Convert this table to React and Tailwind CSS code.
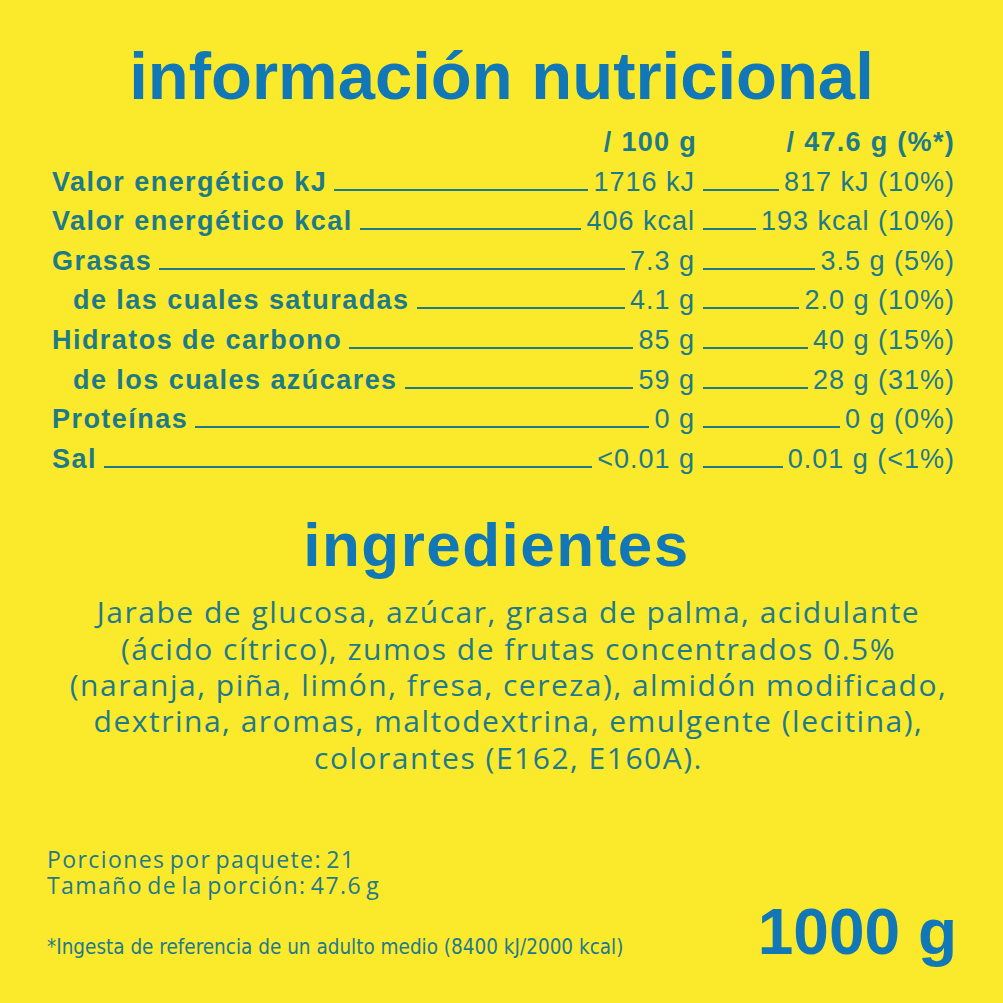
import React from 'react'

const rows = [
  { label: 'Valor energético kJ', a: '1716 kJ', b: '817 kJ (10%)' },
  { label: 'Valor energético kcal', a: '406 kcal', b: '193 kcal (10%)' },
  { label: 'Grasas', a: '7.3 g', b: '3.5 g (5%)' },
  { label: 'de las cuales saturadas', a: '4.1 g', b: '2.0 g (10%)', sub: true },
  { label: 'Hidratos de carbono', a: '85 g', b: '40 g (15%)' },
  { label: 'de los cuales azúcares', a: '59 g', b: '28 g (31%)', sub: true },
  { label: 'Proteínas', a: '0 g', b: '0 g (0%)' },
  { label: 'Sal', a: '<0.01 g', b: '0.01 g (<1%)' },
]

const ingredients = [
  'Jarabe de glucosa, azúcar, grasa de palma, acidulante',
  '(ácido cítrico), zumos de frutas concentrados 0.5%',
  '(naranja, piña, limón, fresa, cereza), almidón modificado,',
  'dextrina, aromas, maltodextrina, emulgente (lecitina),',
  'colorantes (E162, E160A).',
]

const Leader = () => <div className="flex-1 h-[2px] bg-[#1d7a89] mb-[1px]" />

const App = () => {
  return (
    <div className="w-[1003px] h-[1003px] flex flex-col bg-[#fbe92b] overflow-hidden font-['Liberation_Sans',Arial,sans-serif]">
      <h1 className="pt-[42px] text-center text-[67px] leading-none font-bold text-[#1177b6]">
        información nutricional
      </h1>

      <div className="mt-[14px] pl-[52px] pr-[48px] text-[27px] text-[#1d7a89]">
        <div className="flex items-baseline h-[39.6px] leading-[39.6px] font-bold tracking-[1.3px]">
          <div className="flex-1 text-right pr-[6px]">/ 100 g</div>
          <div className="w-[252px] text-right">/ 47.6 g (%*)</div>
        </div>
        {rows.map((r, i) => (
          <div key={i} className="flex items-baseline h-[39.6px] leading-[39.6px]">
            <span className={`font-bold tracking-[1.45px] mr-[7px] ${r.sub ? 'pl-[21px]' : ''}`}>{r.label}</span>
            <Leader />
            <span className="ml-[5px] mr-[8px] tracking-[1px]">{r.a}</span>
            <div className="w-[252px] flex items-baseline">
              <Leader />
              <span className="ml-[5px] tracking-[1px]">{r.b}</span>
            </div>
          </div>
        ))}
      </div>

      <h2 className="mt-[35px] pr-[10px] text-center text-[62px] leading-none font-bold tracking-[1.5px] text-[#1177b6]">
        ingredientes
      </h2>

      <div className="mt-[18px] pl-[14px] text-center text-[30px] leading-[36.3px] tracking-[1.5px] text-[#1f7a8b] font-['Open_Sans',sans-serif]">
        {ingredients.map((l, i) => (
          <div key={i}>{l}</div>
        ))}
      </div>

      <div className="mt-auto pb-[39px]">
        <div className="pl-[47px] text-[23px] leading-[26px] text-[#1f7a8b] font-['Open_Sans',sans-serif] tracking-[1.4px] [word-spacing:-3px]">
          <div>Porciones por paquete: 21</div>
          <div>Tamaño de la porción: 47.6 g</div>
        </div>

        <div className="mt-[2px] pl-[47px] pr-[46px] flex items-baseline justify-between">
          <span className="text-[20.5px] text-[#1f7a8b] font-['Liberation_Sans_Narrow','DejaVu_Sans_Condensed',sans-serif]">
            *Ingesta de referencia de un adulto medio (8400 kJ/2000 kcal)
          </span>
          <span className="text-[64px] leading-none font-bold text-[#1177b6]">1000 g</span>
        </div>
      </div>
    </div>
  )
}

export default App
